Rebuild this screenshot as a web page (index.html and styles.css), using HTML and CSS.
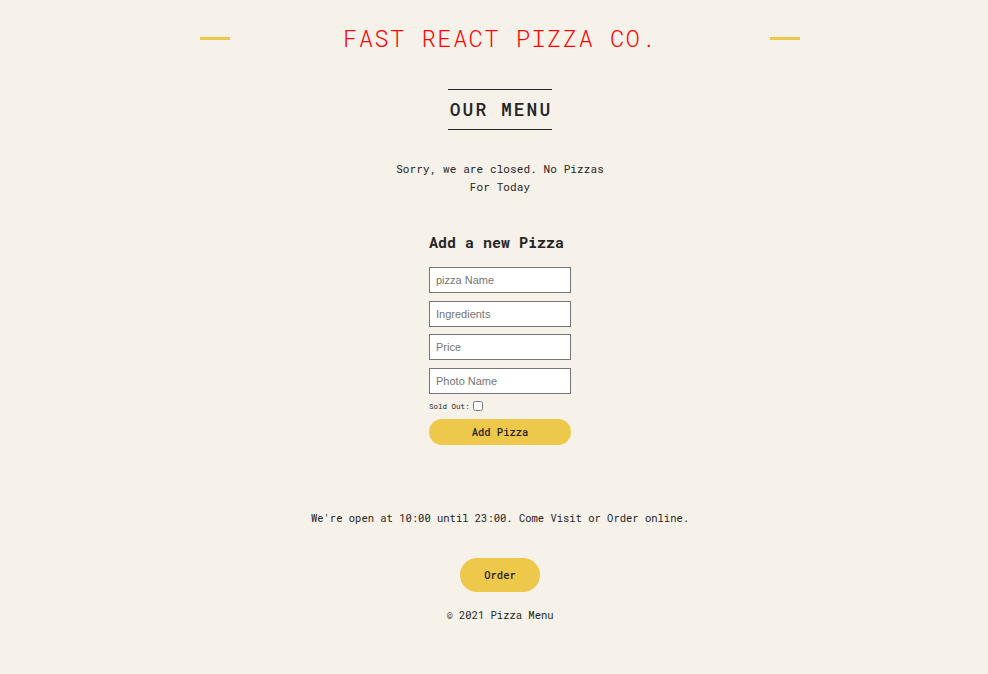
FILE: index.html
```html
<!DOCTYPE html>
<html lang="en">
<head>
<meta charset="utf-8">
<title>Fast React Pizza Co.</title>
<link rel="stylesheet" href="styles.css">
</head>
<body>
<div class="page">
  <header class="header">
    <span class="rule"></span>
    <h1 class="title">Fast React Pizza Co.</h1>
    <span class="rule"></span>
  </header>

  <main class="menu">
    <h2 class="menu-title">Our Menu</h2>
    <p class="closed">Sorry, we are closed. No Pizzas For Today</p>

    <form class="add-form">
      <h3 class="form-title">Add a new Pizza</h3>
      <input class="field" type="text" placeholder="pizza Name">
      <input class="field" type="text" placeholder="Ingredients">
      <input class="field" type="text" placeholder="Price">
      <input class="field" type="text" placeholder="Photo Name">
      <label class="sold">Sold Out: <input class="check" type="checkbox"></label>
      <button class="add-btn" type="button">Add Pizza</button>
    </form>
  </main>

  <footer class="footer">
    <p class="hours">We're open at 10:00 until 23:00. Come Visit or Order online.</p>
    <button class="order-btn" type="button">Order</button>
    <p class="copy">© 2021 Pizza Menu</p>
  </footer>
</div>
</body>
</html>
```
FILE: styles.css
```css
* { box-sizing: border-box; }
html, body { margin: 0; padding: 0; }
body {
  background: #f6f1e9;
  color: #252525;
  font-family: "Roboto Mono", "Liberation Mono", "DejaVu Sans Mono", monospace;
  font-size: 10.5px;
}
.page {
  padding-left: 12px;
  display: flex;
  flex-direction: column;
  align-items: center;
}
.header {
  display: flex;
  align-items: center;
  justify-content: center;
  gap: 113px;
  margin-top: 23px;
}
.rule {
  width: 30px;
  height: 3px;
  background: #edc84b;
}
.title {
  margin: 0;
  font-size: 24px;
  line-height: 30px;
  font-weight: 300;
  letter-spacing: 1.3px;
  text-transform: uppercase;
  color: #ff0000;
}
.menu {
  display: flex;
  flex-direction: column;
  align-items: center;
}
.menu-title {
  margin: 36px 0 0;
  padding: 8px 0 8px 2px;
  border-top: 1px solid #252525;
  border-bottom: 1px solid #252525;
  font-size: 18px;
  line-height: 23px;
  font-weight: 500;
  letter-spacing: 2px;
  text-transform: uppercase;
}
.closed {
  margin: 30px 0 0;
  width: 220px;
  text-align: center;
  font-size: 11px;
  line-height: 18px;
  letter-spacing: 0.1px;
}
.add-form {
  margin-top: 36px;
  width: 142px;
  display: flex;
  flex-direction: column;
}
.form-title {
  margin: 0 0 15px;
  font-size: 15px;
  line-height: 20px;
  font-weight: 700;
  white-space: nowrap;
}
.field {
  width: 142px;
  height: 26px;
  margin: 0 0 7.7px;
  padding: 0 6px;
  border: 1px solid #767676;
  border-radius: 0;
  background: #fff;
  font-family: "Liberation Sans", Arial, sans-serif;
  font-size: 11px;
  color: #222;
}
.field::placeholder { color: #757575; }
.sold {
  display: flex;
  align-items: center;
  gap: 3px;
  font-size: 7.5px;
  line-height: 12px;
  margin: -2px 0 0;
}
.check {
  width: 10px;
  height: 10px;
  margin: 0;
}
.add-btn {
  margin-top: 7px;
  height: 26px;
  width: 142px;
  border: none;
  border-radius: 13px;
  background: #edc84b;
  color: #252525;
  font-family: inherit;
  font-size: 10.5px;
  font-weight: 500;
  cursor: pointer;
}
.footer {
  display: flex;
  flex-direction: column;
  align-items: center;
  margin-top: 64px;
}
.hours {
  margin: 0;
  line-height: 18px;
}
.order-btn {
  margin-top: 31px;
  width: 80px;
  height: 34px;
  border: none;
  border-radius: 17px;
  background: #edc84b;
  color: #252525;
  font-family: inherit;
  font-size: 10.5px;
  font-weight: 500;
  cursor: pointer;
}
.copy {
  margin: 14px 0 0;
  line-height: 18px;
}
```
